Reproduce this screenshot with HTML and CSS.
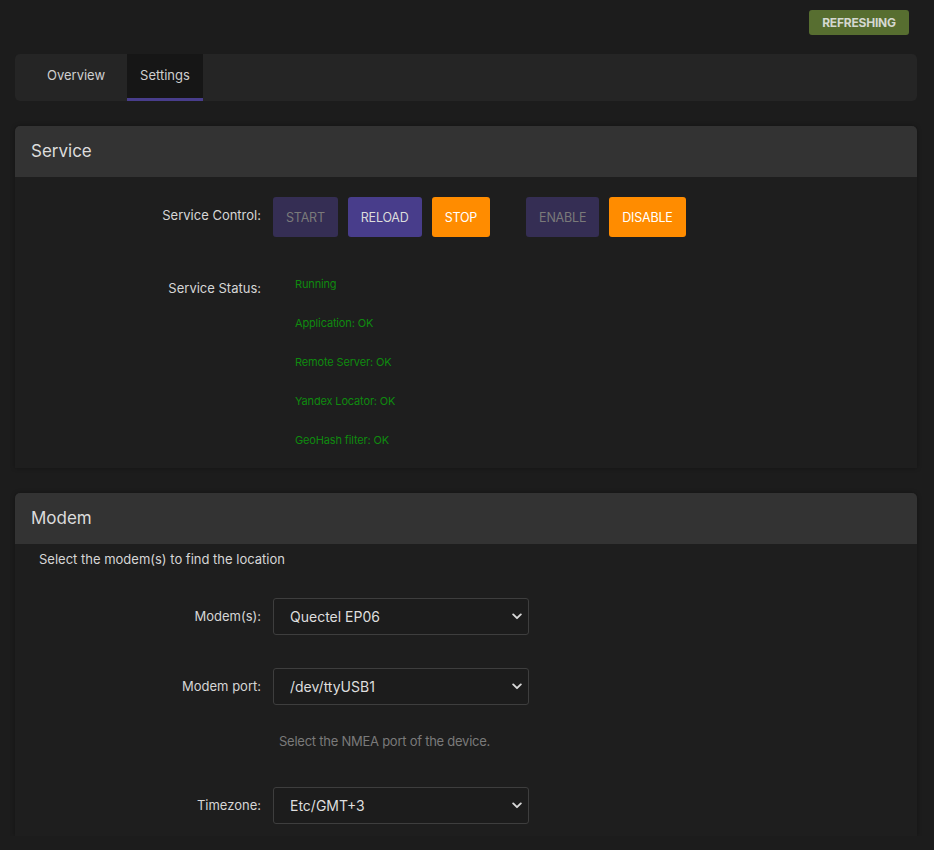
FILE: index.html
```html
<!DOCTYPE html>
<html>
<head>
<meta charset="utf-8">
<link rel="stylesheet" href="styles.css">
</head>
<body>
<div class="topbar">
  <span class="badge">REFRESHING</span>
</div>
<div class="main">
  <ul class="tabs">
    <li class="tab">Overview</li>
    <li class="tab active">Settings</li>
  </ul>

  <section class="panel">
    <h3 class="panel-head">Service</h3>
    <div class="panel-body service-body">
      <div class="row">
        <label class="lbl">Service Control:</label>
        <div class="field buttons">
          <button class="btn btn-dim">START</button>
          <button class="btn btn-purple">RELOAD</button>
          <button class="btn btn-orange">STOP</button>
          <span class="spacer"></span>
          <button class="btn btn-dim">ENABLE</button>
          <button class="btn btn-orange">DISABLE</button>
        </div>
      </div>
      <div class="row status-row">
        <label class="lbl lbl-status">Service Status:</label>
        <ul class="field status-list">
          <li>Running</li>
          <li>Application: OK</li>
          <li>Remote Server: OK</li>
          <li>Yandex Locator: OK</li>
          <li>GeoHash filter: OK</li>
        </ul>
      </div>
    </div>
  </section>

  <section class="panel">
    <h3 class="panel-head">Modem</h3>
    <div class="panel-body modem-body">
      <p class="desc">Select the modem(s) to find the location</p>
      <div class="row sel-row first">
        <label class="lbl">Modem(s):</label>
        <div class="field select-wrap">
          <select class="sel"><option>Quectel EP06</option></select>
          <svg class="chev" width="10" height="7" viewBox="0 0 10 7"><path d="M1.2 1.4 L5 5.2 L8.8 1.4" fill="none" stroke="#d8d8d8" stroke-width="1.9" stroke-linecap="round" stroke-linejoin="round"/></svg>
        </div>
      </div>
      <div class="row sel-row">
        <label class="lbl">Modem port:</label>
        <div class="field">
          <div class="select-wrap">
            <select class="sel"><option>/dev/ttyUSB1</option></select>
            <svg class="chev" width="10" height="7" viewBox="0 0 10 7"><path d="M1.2 1.4 L5 5.2 L8.8 1.4" fill="none" stroke="#d8d8d8" stroke-width="1.9" stroke-linecap="round" stroke-linejoin="round"/></svg>
          </div>
          <div class="help">Select the NMEA port of the device.</div>
        </div>
      </div>
      <div class="row sel-row tz">
        <label class="lbl">Timezone:</label>
        <div class="field select-wrap">
          <select class="sel"><option>Etc/GMT+3</option></select>
          <svg class="chev" width="10" height="7" viewBox="0 0 10 7"><path d="M1.2 1.4 L5 5.2 L8.8 1.4" fill="none" stroke="#d8d8d8" stroke-width="1.9" stroke-linecap="round" stroke-linejoin="round"/></svg>
        </div>
      </div>
    </div>
  </section>
</div>
</body>
</html>
```

FILE: styles.css
```css
* { box-sizing: border-box; }
html, body {
  margin: 0;
  padding: 0;
  background: #1c1c1c;
  color: #d6d6d6;
  font-family: "Inter", "Noto Sans", sans-serif;
  font-size: 13px;
}
.topbar {
  height: 54px;
  display: flex;
  justify-content: flex-end;
  align-items: flex-start;
  padding: 10px 25px 0 0;
}
.badge {
  display: inline-block;
  width: 100px;
  height: 25px;
  line-height: 25px;
  text-align: center;
  background: #576e30;
  color: #d4d8d0;
  font-weight: 700;
  font-size: 12px;
  border-radius: 3px;
  letter-spacing: -0.2px;
}
.main {
  padding: 0 17px 0 15px;
}
.tabs {
  list-style: none;
  margin: 0;
  padding: 0 0 0 12px;
  height: 47px;
  background: #252525;
  border-radius: 5px;
  display: flex;
}
.tab {
  padding: 0 22px 0 20px;
  line-height: 43px;
  height: 47px;
  color: #cfcfcf;
  font-size: 13px;
}
.tab.active {
  background: #161616;
  border-bottom: 3px solid #483d8b;
  padding: 0 13px;
}
.panel {
  margin-top: 25px;
  background: #1e1e1e;
  border-radius: 5px 5px 0 0;
  box-shadow: 0 0 4px rgba(0,0,0,0.35);
}
.panel-head {
  margin: 0;
  height: 51px;
  line-height: 51px;
  padding: 0 16px;
  background: #333333;
  border-radius: 5px 5px 0 0;
  font-weight: 400;
  font-size: 17px;
  color: #dcdcdc;
}
.row {
  display: flex;
  align-items: flex-start;
}
.lbl {
  width: 246px;
  flex: none;
  text-align: right;
  color: #d6d6d6;
}
.field {
  margin-left: 12px;
}
.service-body {
  padding: 20px 0 8px;
}
.service-body .row:first-child .lbl {
  line-height: 36px;
}
.buttons {
  display: flex;
  gap: 10px;
}
.spacer { width: 16px; }
.btn {
  height: 40px;
  border: none;
  border-radius: 3px;
  padding: 0 13px;
  font-family: inherit;
  font-size: 12.5px;
  font-weight: 400;
  letter-spacing: -0.2px;
}
.btn-dim { background: #352e54; color: #7a7a7a; }
.btn-purple { background: #483d8b; color: #dcdcdc; }
.btn-orange { background: #ff8c00; color: #ffffff; }
.status-row { margin-top: 28px; }
.lbl-status { line-height: 39px; padding-top: 4px; }
.status-list {
  list-style: none;
  margin: 0 0 0 34px;
  padding: 0;
}
.status-list li {
  line-height: 39px;
  font-size: 11px;
  color: #0f8a0f;
  letter-spacing: -0.15px;
}
.modem-body {
  padding: 6px 0 12px;
}
.desc {
  margin: 0 0 0 24px;
  line-height: 18px;
  color: #d6d6d6;
}
.sel-row .lbl { line-height: 37px; }
.sel-row { margin-top: 33px; }
.sel-row.first { margin-top: 30px; }
.sel-row.tz { margin-top: 36px; }
.select-wrap {
  position: relative;
  width: 256px;
}
.sel {
  display: block;
  width: 256px;
  height: 37px;
  appearance: none;
  -webkit-appearance: none;
  background: #1c1c1c;
  border: 1px solid #3e3e3e;
  border-radius: 3px;
  color: #dedede;
  font-family: inherit;
  font-size: 14px;
  padding: 0 16px;
}
.chev {
  position: absolute;
  right: 7px;
  top: 15px;
}
.help {
  margin: 26px 0 0 6px;
  line-height: 20px;
  color: #7a7a7a;
  letter-spacing: -0.25px;
}
```
